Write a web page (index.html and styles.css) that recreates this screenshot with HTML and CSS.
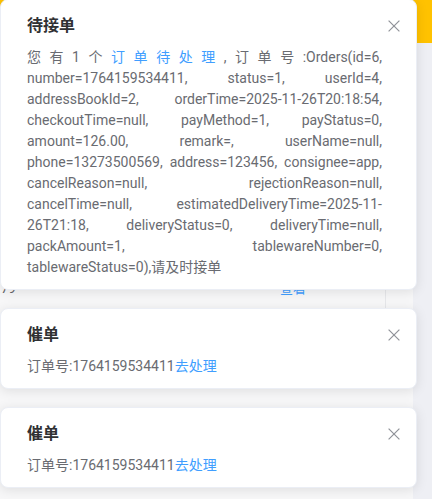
FILE: index.html
```html
<!DOCTYPE html>
<html lang="zh-CN">
<head>
<meta charset="utf-8">
<title>通知</title>
<link rel="stylesheet" href="styles.css">
</head>
<body>
  <header class="topbar"></header>
  <main class="content">
    <div class="row">
      <span class="cell num">79</span>
      <span class="cell op">查看</span>
    </div>
  </main>

  <section class="notices">
    <div class="notice">
      <div class="group">
        <h2 class="title">待接单</h2>
        <div class="body">
          <span class="line">您有1个<span class="link">订单待处理</span>,订单号:Orders(id=6,</span>
          <span class="line">number=1764159534411, status=1, userId=4,</span>
          <span class="line">addressBookId=2, orderTime=2025-11-26T20:18:54,</span>
          <span class="line">checkoutTime=null, payMethod=1, payStatus=0,</span>
          <span class="line">amount=126.00, remark=, userName=null,</span>
          <span class="line">phone=13273500569, address=123456, consignee=app,</span>
          <span class="line">cancelReason=null, rejectionReason=null,</span>
          <span class="line">cancelTime=null, estimatedDeliveryTime=2025-11-</span>
          <span class="line">26T21:18, deliveryStatus=0, deliveryTime=null,</span>
          <span class="line">packAmount=1, tablewareNumber=0,</span>
          <span class="line end">tablewareStatus=0),请及时接单</span>
        </div>
      </div>
      <svg class="close" viewBox="0 0 16 16" aria-hidden="true"><path d="M2.6 2.6 L13.4 13.4 M13.4 2.6 L2.6 13.4"/></svg>
    </div>

    <div class="notice">
      <div class="group">
        <h2 class="title">催单</h2>
        <div class="body">
          <span class="line end">订单号:1764159534411<span class="link">去处理</span></span>
        </div>
      </div>
      <svg class="close" viewBox="0 0 16 16" aria-hidden="true"><path d="M2.6 2.6 L13.4 13.4 M13.4 2.6 L2.6 13.4"/></svg>
    </div>

    <div class="notice">
      <div class="group">
        <h2 class="title">催单</h2>
        <div class="body">
          <span class="line end">订单号:1764159534411<span class="link">去处理</span></span>
        </div>
      </div>
      <svg class="close" viewBox="0 0 16 16" aria-hidden="true"><path d="M2.6 2.6 L13.4 13.4 M13.4 2.6 L2.6 13.4"/></svg>
    </div>
  </section>
</body>
</html>
```

FILE: styles.css
```css
html, body {
  margin: 0;
  padding: 0;
}

body {
  position: relative;
  width: 432px;
  height: 499px;
  overflow: hidden;
  background: #eeeff4;
  font-family: Roboto, "Noto Sans CJK SC", sans-serif;
}

.topbar {
  height: 43px;
  background: #ffc200;
}

.content {
  width: 413px;
  height: 456px;
  background: #f7f7f8;
  display: flex;
  flex-direction: column;
}

.row {
  display: flex;
  margin-top: 236px;
  height: 30px;
  font-size: 13px;
  line-height: 20px;
}

.cell.num {
  width: 279px;
  padding-left: 1px;
  color: #606266;
}

.cell.op {
  width: 105px;
  color: #409eff;
  border-right: 1px solid #e6e7ea;
}

.notices {
  position: absolute;
  top: -1px;
  left: 0;
  width: 417px;
  display: flex;
  flex-direction: column;
  gap: 18px;
}

.notice {
  position: relative;
  display: flex;
  box-sizing: border-box;
  width: 417px;
  padding: 14px 26px 11px 13px;
  border: 1px solid #ebeef5;
  border-radius: 8px;
  background: #fff;
  box-shadow: 0 2px 12px 0 rgba(0, 0, 0, 0.1);
}

.group {
  flex: 1;
  margin-left: 13px;
  margin-right: 8px;
  min-width: 0;
}

.title {
  margin: 0;
  font-size: 16px;
  font-weight: 700;
  line-height: 24px;
  color: #303133;
}

.body {
  margin-top: 9px;
  font-size: 14px;
  line-height: 21px;
  color: #696b71;
}

.line {
  display: block;
  text-align: justify;
  text-align-last: justify;
}

.line.end {
  text-align-last: left;
}

.link {
  color: #409eff;
}

.close {
  position: absolute;
  top: 18px;
  right: 14px;
  width: 16px;
  height: 16px;
  fill: none;
  stroke: #909399;
  stroke-width: 1.2;
}
```
